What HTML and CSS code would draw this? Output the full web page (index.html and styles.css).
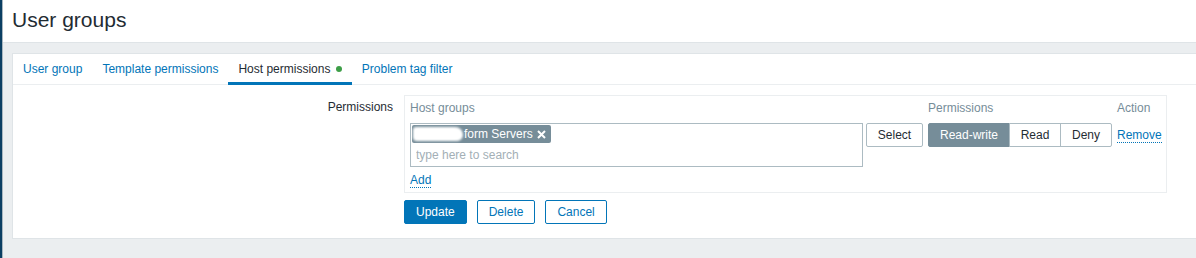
FILE: index.html
```html
<!DOCTYPE html>
<html lang="en">
  <head>
    <meta charset="UTF-8" />
    <title>User groups</title>
    <link rel="stylesheet" href="styles.css">
  </head>
  <body>
    <div class="layout">
      <div class="sidebar"></div>
      <main class="page">
        <header class="page-header">
          <h1>User groups</h1>
        </header>
        <div class="page-body">
          <div class="tab-container">
            <ul class="tabs">
              <li><a href="#">User group</a></li>
              <li><a href="#">Template permissions</a></li>
              <li class="active"><a href="#">Host permissions <span class="dot"></span></a></li>
              <li><a href="#">Problem tag filter</a></li>
            </ul>
            <div class="tab-content">
              <div class="form-row">
                <label class="form-label">Permissions</label>
                <div class="form-field">
                  <div class="perm-table">
                    <div class="th">Host groups</div>
                    <div class="th">Permissions</div>
                    <div class="th">Action</div>

                    <div class="cell-groups">
                      <div class="multiselect">
                        <div class="chips">
                          <span class="chip"><span class="blur"></span>form Servers
                            <svg class="chip-x" width="9" height="9" viewBox="0 0 9 9"><path d="M1 1L8 8M8 1L1 8" stroke="#fff" stroke-width="2" /></svg>
                          </span>
                        </div>
                        <input class="ms-input" type="text" placeholder="type here to search" />
                      </div>
                      <button class="btn-alt">Select</button>
                    </div>
                    <div class="radio-group">
                      <span class="seg selected">Read-write</span>
                      <span class="seg">Read</span>
                      <span class="seg">Deny</span>
                    </div>
                    <div class="cell-action"><a href="#" class="link">Remove</a></div>

                    <div class="cell-add"><a href="#" class="link">Add</a></div>
                  </div>

                  <div class="form-actions">
                    <button class="btn btn-primary">Update</button>
                    <button class="btn">Delete</button>
                    <button class="btn">Cancel</button>
                  </div>
                </div>
              </div>
            </div>
          </div>
        </div>
      </main>
    </div>
  </body>
</html>
```

FILE: styles.css
```css
html,
body {
  margin: 0;
  padding: 0;
  height: 100%;
  overflow: hidden;
}
body {
  background-color: #ebeef0;
  font-family: "Liberation Sans", Arial, sans-serif;
  font-size: 12px;
  color: #1f2c33;
}
.layout {
  display: flex;
  min-height: 100%;
}
.sidebar {
  width: 2px;
  background-color: #0b3f63;
  border-right: 1px solid #a9b7c0;
}
.page {
  flex: 1;
}

/* header */
.page-header {
  height: 43px;
  box-sizing: border-box;
  background-color: #ffffff;
  border-bottom: 1px solid #dfe4e7;
  padding: 8px 0 0 9px;
}
.page-header h1 {
  margin: 0;
  font-size: 21px;
  font-weight: normal;
  line-height: 24px;
}

.page-body {
  padding: 10px 0 0 9px;
}
.tab-container {
  background-color: #ffffff;
  border: 1px solid #dfe4e7;
  margin-right: -30px;
}

/* tabs */
.tabs {
  list-style: none;
  margin: 0;
  padding: 0;
  display: flex;
  border-bottom: 1px solid #ebeef0;
}
.tabs li {
  margin-bottom: -1px;
}
.tabs a {
  display: block;
  padding: 2px 10px 0;
  box-sizing: border-box;
  line-height: 26px;
  height: 31px;
  border-bottom: 3px solid transparent;
  color: #0275b8;
  text-decoration: none;
}
.tabs .active a {
  color: #1f2c33;
  border-bottom-color: #0275b8;
}
.dot {
  display: inline-block;
  width: 6px;
  height: 6px;
  border-radius: 50%;
  background-color: #3d9e47;
  margin-left: 2px;
  vertical-align: 1px;
}

.tab-content {
  padding: 10px 0 14px;
}

/* form */
.form-row {
  display: flex;
}
.form-label {
  width: 380px;
  text-align: right;
  padding-top: 5px;
  line-height: 14px;
  margin-right: 11px;
}
.perm-table {
  width: 763px;
  box-sizing: border-box;
  border: 1px solid #ebeef0;
  padding: 5px;
  display: grid;
  grid-template-columns: 513px 184px 1fr;
  column-gap: 5px;
  row-gap: 6px;
}
.th {
  color: #768d99;
  line-height: 14px;
  padding-bottom: 2px;
}
.cell-groups {
  display: flex;
  align-items: flex-start;
}
.multiselect {
  width: 453px;
  height: 44px;
  box-sizing: border-box;
  border: 1px solid #acbbc2;
}
.chips {
  padding: 1px 0 0 1px;
  height: 19px;
}
.chip {
  display: inline-flex;
  align-items: center;
  height: 18px;
  padding: 0 5px 0 1px;
  border-radius: 2px;
  background-color: #768d99;
  color: #ffffff;
}
.blur {
  display: inline-block;
  width: 50px;
  height: 14px;
  margin-right: 1px;
  border-radius: 3px 8px 6px 4px;
  background-color: #ffffff;
  filter: blur(1px);
}
.chip-x {
  margin-left: 4px;
}
.ms-input {
  display: block;
  width: 100%;
  box-sizing: border-box;
  height: 21px;
  border: none;
  padding: 0 0 0 5px;
  font-family: inherit;
  font-size: 12px;
  outline: none;
}
.ms-input::placeholder {
  color: #a3afb6;
}
.btn-alt {
  margin-left: 3px;
  width: 57px;
  height: 24px;
  background-color: #ffffff;
  border: 1px solid #acbbc2;
  border-radius: 2px;
  font-family: inherit;
  font-size: 12px;
  color: #1f2c33;
  padding: 0;
}
.radio-group {
  display: flex;
  height: 24px;
  align-self: start;
}
.seg {
  height: 24px;
  box-sizing: border-box;
  line-height: 22px;
  text-align: center;
  border: 1px solid #acbbc2;
  margin-left: -1px;
  width: 52px;
}
.seg:first-child {
  margin-left: 0;
  width: 82px;
  border-radius: 2px 0 0 2px;
}
.seg:last-child {
  border-radius: 0 2px 2px 0;
}
.seg.selected {
  background-color: #768d99;
  border-color: #768d99;
  color: #ffffff;
}
.cell-action {
  line-height: 24px;
  align-self: start;
}
.cell-add {
  line-height: 14px;
  grid-column: 1 / 4;
}
.link {
  color: #0275b8;
  text-decoration: none;
  border-bottom: 1px dotted #0275b8;
}

/* buttons */
.form-actions {
  display: flex;
  gap: 10px;
  margin-top: 7px;
}
.btn {
  height: 24px;
  padding: 0 11px;
  border: 1px solid #0275b8;
  border-radius: 2px;
  background-color: #ffffff;
  color: #0275b8;
  font-family: inherit;
  font-size: 12px;
}
.btn-primary {
  background-color: #0275b8;
  color: #ffffff;
}
```
